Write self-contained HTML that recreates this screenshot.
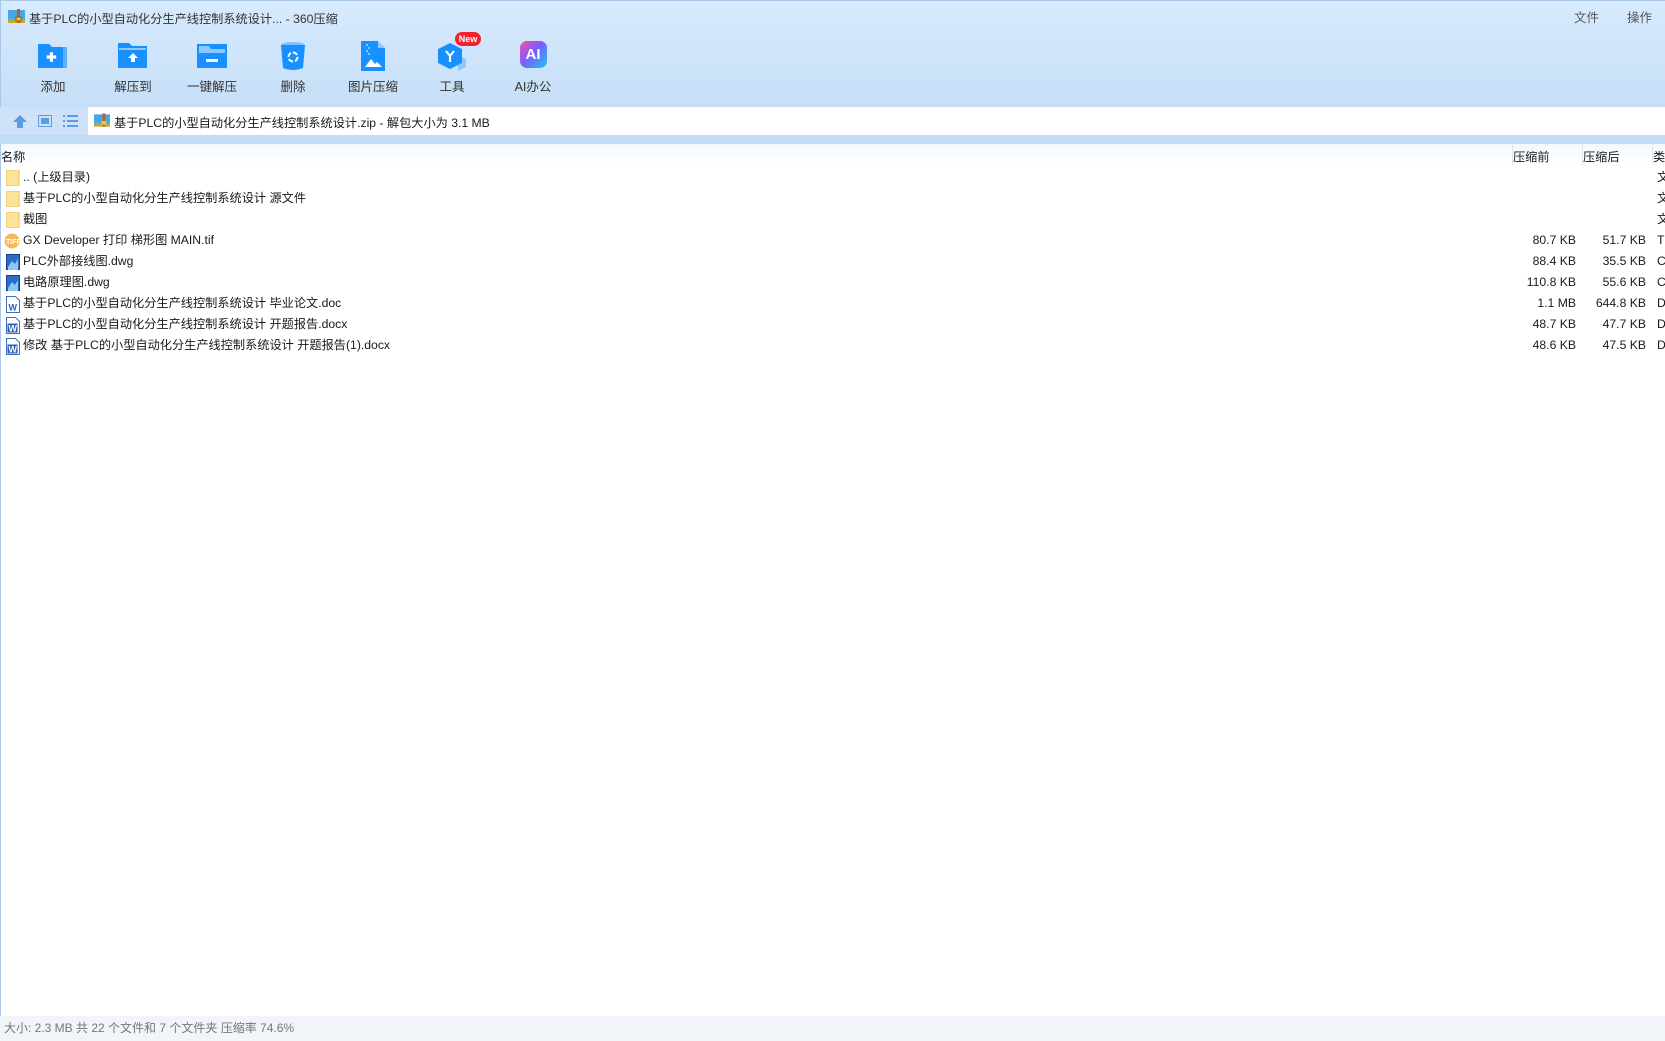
<!DOCTYPE html>
<html><head><meta charset="utf-8"><style>
*{margin:0;padding:0;box-sizing:border-box}
body{width:1665px;height:1041px;overflow:hidden;background:#fff;font-family:"Liberation Sans","Noto Sans CJK SC",sans-serif;font-size:12.2px;color:#1a1a1a;position:relative}
.top{position:absolute;left:0;top:0;width:1665px;height:107px;background:linear-gradient(#d7eafe,#c6dff7);border-top:1px solid #aac8ea;border-left:1px solid #aac8ea}
.title{position:absolute;left:28px;top:8px;font-size:12.2px;color:#333}
.menu{position:absolute;top:6px;font-size:12.5px;color:#555}
.tb{position:absolute;top:40px;width:80px;text-align:center}
.tb svg{display:block;margin:0 auto}
.tb span{display:block;margin-top:7px;font-size:12.5px;color:#333}
.addr{position:absolute;left:88px;top:107px;width:1577px;height:28px;background:#fff}
.nav{position:absolute;top:107px;height:28px;left:0;width:88px;background:#cde2f8}
.band{position:absolute;left:0;top:135px;width:1665px;height:9px;background:#c2dcf6}
.hdr{position:absolute;left:0;top:144px;width:1665px;height:21px;background:linear-gradient(#f3f8fe,#fff)}
.hdr div{position:absolute;top:3px}
.sep{position:absolute;top:0;height:21px;border-left:1px solid #dbe8f6}
.row{position:absolute;left:0;width:1665px;height:21px;line-height:21px}
.row .n{position:absolute;left:23px}
.row .ic{position:absolute;left:6px;top:3px}
.row .a{position:absolute;right:89px}
.row .b{position:absolute;right:19px}
.row .t{position:absolute;left:1657px}
.status{position:absolute;left:0;top:1016px;width:1665px;height:25px;background:#f1f4f9;color:#777;font-size:12px;line-height:24px;padding-left:4px}
.lb{position:absolute;left:0;top:144px;bottom:25px;border-left:1px solid #aac8ea}
</style></head><body>
<div class="top">
<svg style="position:absolute;left:7px;top:8px" width="17" height="15" viewBox="0 0 17 15"><rect x="0" y="1" width="17" height="13" fill="#4aa5ea"/><rect x="0" y="10" width="17" height="2" fill="#7cc242"/><rect x="0" y="12" width="17" height="2" fill="#f39a1e"/><rect x="9" y="0" width="3" height="14" fill="#b5651d"/><rect x="8" y="8" width="5" height="4" fill="#f6c342" stroke="#8a4a12" stroke-width=".8"/></svg>
<div class="title">基于PLC的小型自动化分生产线控制系统设计... - 360压缩</div>
<div class="menu" style="left:1573px">文件</div>
<div class="menu" style="left:1626px">操作</div>
<div class="tb" style="left:12px"><svg width="32" height="28" viewBox="0 0 32 28"><path d="M1 3h11l3 3h15v21H1z" fill="#1890ff"/><path d="M26 6h4v21h-4z" fill="#5db1ff"/><path d="M13 10h4v4h4v4h-4v4h-4v-4H9v-4h4z" fill="#fff" transform="scale(.8) translate(3,4)"/></svg><span>添加</span></div>
<div class="tb" style="left:92px"><svg width="32" height="28" viewBox="0 0 32 28"><path d="M1 2h11l3 3h15v22H1z" fill="#1890ff"/><rect x="2" y="7" width="27" height="2" fill="#8cc8ff"/><path d="M16 12l5 5h-3v4h-4v-4h-3z" fill="#fff"/></svg><span>解压到</span></div>
<div class="tb" style="left:171px"><svg width="32" height="28" viewBox="0 0 32 28"><path d="M1 3h30v24H1z" fill="#1890ff"/><path d="M3 5h10l2 3h14v4H3z" fill="#8cc8ff"/><rect x="10" y="18" width="12" height="3" fill="#fff"/></svg><span>一键解压</span></div>
<div class="tb" style="left:252px"><svg width="26" height="30" viewBox="0 0 26 30"><ellipse cx="13" cy="4" rx="12" ry="3" fill="#7cc0ff"/><path d="M1 4h24l-2 23q-10 4-20 0z" fill="#1890ff"/><circle cx="13" cy="16" r="4.5" fill="none" stroke="#fff" stroke-width="2" stroke-dasharray="5 2"/></svg><span style="margin-top:5px">删除</span></div>
<div class="tb" style="left:332px"><svg width="24" height="30" viewBox="0 0 24 30"><path d="M0 0h17l7 7v23H0z" fill="#1890ff"/><path d="M17 0v7h7z" fill="#8cc8ff"/><path d="M4 26l6-8 4 5 2-2 5 5z" fill="#fff"/><rect x="5" y="3" width="2" height="2" fill="#8cc8ff"/><rect x="7" y="6" width="2" height="2" fill="#8cc8ff"/><rect x="5" y="9" width="2" height="2" fill="#8cc8ff"/><rect x="7" y="12" width="2" height="2" fill="#8cc8ff"/></svg><span style="margin-top:5px">图片压缩</span></div>
<div class="tb" style="left:411px"><svg width="32" height="30" viewBox="0 0 32 30"><path d="M22 14l8 4v8l-8 4z" fill="#8cc8ff"/><path d="M14 2l12 6v14l-12 6-12-6V8z" fill="#1890ff"/><path d="M10 10l4 5 4-5M14 15v6" stroke="#fff" stroke-width="2.2" fill="none"/></svg><span style="margin-top:5px">工具</span></div>
<div style="position:absolute;left:454px;top:31px;width:26px;height:14px;border-radius:7px;background:#f5222d;color:#fff;font-size:9px;font-weight:bold;text-align:center;line-height:14px">New</div>
<div class="tb" style="left:492px"><div style="margin:0 auto;width:27px;height:27px;border-radius:7px;background:linear-gradient(135deg,#ff4fa8,#7b5cff 45%,#19c8f0);color:#fff;font-weight:bold;font-size:15px;line-height:27px">AI</div><span style="margin-top:8px">AI办公</span></div>
</div>
<div class="nav">
<svg style="position:absolute;left:13px;top:8px" width="14" height="13" viewBox="0 0 14 13"><path d="M7 0l7 7H10v6H4V7H0z" fill="#5b9ce6"/></svg>
<svg style="position:absolute;left:38px;top:8px" width="14" height="12" viewBox="0 0 14 12"><rect x=".5" y=".5" width="13" height="11" fill="none" stroke="#5b9ce6"/><rect x="3" y="3" width="8" height="6" fill="#5b9ce6"/></svg>
<svg style="position:absolute;left:63px;top:8px" width="15" height="12" viewBox="0 0 15 12"><g fill="#5b9ce6"><rect x="0" y="0" width="2" height="2"/><rect x="4" y="0" width="11" height="2"/><rect x="0" y="5" width="2" height="2"/><rect x="4" y="5" width="11" height="2"/><rect x="0" y="10" width="2" height="2"/><rect x="4" y="10" width="11" height="2"/></g></svg>
</div>
<div class="addr">
<svg style="position:absolute;left:6px;top:6px" width="16" height="15" viewBox="0 0 17 15"><rect x="0" y="1" width="17" height="13" fill="#4aa5ea"/><rect x="0" y="10" width="17" height="2" fill="#7cc242"/><rect x="0" y="12" width="17" height="2" fill="#f39a1e"/><rect x="9" y="0" width="3" height="14" fill="#b5651d"/><rect x="8" y="8" width="5" height="4" fill="#f6c342"/></svg>
<div style="position:absolute;left:26px;top:6px">基于PLC的小型自动化分生产线控制系统设计.zip - 解包大小为 3.1 MB</div>
</div>
<div class="band"></div>
<div class="hdr"><div style="left:1px">名称</div><span class="sep" style="left:1512px"></span><span class="sep" style="left:1582px"></span><span class="sep" style="left:1652px"></span><div style="left:1513px">压缩前</div><div style="left:1583px">压缩后</div><div style="left:1653px">类</div></div>
<div class="lb"></div>

<div class="row" style="top:167px"><svg class="ic" width="14" height="16"><rect x="0" y="0" width="13" height="16" fill="#fbe39a" stroke="#e6c25e"/></svg><span class="n">.. (上级目录)</span><span class="t">文</span></div>
<div class="row" style="top:188px"><svg class="ic" width="14" height="16"><rect x="0" y="0" width="13" height="16" fill="#fbe39a" stroke="#e6c25e"/></svg><span class="n">基于PLC的小型自动化分生产线控制系统设计 源文件</span><span class="t">文</span></div>
<div class="row" style="top:209px"><svg class="ic" width="14" height="16"><rect x="0" y="0" width="13" height="16" fill="#fbe39a" stroke="#e6c25e"/></svg><span class="n">截图</span><span class="t">文</span></div>
<div class="row" style="top:230px"><svg class="ic" style="left:4px" width="17" height="16"><circle cx="8" cy="8" r="7.5" fill="#f4b860"/><text x="2" y="11" font-size="7" fill="#fff" font-family="Liberation Sans" font-weight="bold">TIFF</text></svg><span class="n">GX Developer 打印 梯形图 MAIN.tif</span><span class="a">80.7 KB</span><span class="b">51.7 KB</span><span class="t">T</span></div>
<div class="row" style="top:251px"><svg class="ic" width="15" height="16"><rect x=".5" y=".5" width="13" height="15" fill="#2b6cc4" stroke="#123f87"/><path d="M2 13l4-6 3 3 3-5v11H2z" fill="#8ec5f3"/></svg><span class="n">PLC外部接线图.dwg</span><span class="a">88.4 KB</span><span class="b">35.5 KB</span><span class="t">C</span></div>
<div class="row" style="top:272px"><svg class="ic" width="15" height="16"><rect x=".5" y=".5" width="13" height="15" fill="#2b6cc4" stroke="#123f87"/><path d="M2 13l4-6 3 3 3-5v11H2z" fill="#8ec5f3"/></svg><span class="n">电路原理图.dwg</span><span class="a">110.8 KB</span><span class="b">55.6 KB</span><span class="t">C</span></div>
<div class="row" style="top:293px"><svg class="ic" width="15" height="17"><path d="M.5 .5h9l4 4v12H.5z" fill="#fff" stroke="#3d6fb6"/><rect x="2" y="7" width="9" height="8" fill="#fff"/><text x="2.5" y="14.5" font-size="9" font-weight="bold" fill="#2b5fb3" font-family="Liberation Sans">W</text></svg><span class="n">基于PLC的小型自动化分生产线控制系统设计 毕业论文.doc</span><span class="a">1.1 MB</span><span class="b">644.8 KB</span><span class="t">D</span></div>
<div class="row" style="top:314px"><svg class="ic" width="15" height="17"><path d="M.5 .5h9l4 4v12H.5z" fill="#fff" stroke="#3d6fb6"/><rect x="1.5" y="6.5" width="10" height="9" fill="#2b5fb3"/><text x="2.5" y="14.5" font-size="9" font-weight="bold" fill="#fff" font-family="Liberation Sans">W</text></svg><span class="n">基于PLC的小型自动化分生产线控制系统设计 开题报告.docx</span><span class="a">48.7 KB</span><span class="b">47.7 KB</span><span class="t">D</span></div>
<div class="row" style="top:335px"><svg class="ic" width="15" height="17"><path d="M.5 .5h9l4 4v12H.5z" fill="#fff" stroke="#3d6fb6"/><rect x="1.5" y="6.5" width="10" height="9" fill="#2b5fb3"/><text x="2.5" y="14.5" font-size="9" font-weight="bold" fill="#fff" font-family="Liberation Sans">W</text></svg><span class="n">修改 基于PLC的小型自动化分生产线控制系统设计 开题报告(1).docx</span><span class="a">48.6 KB</span><span class="b">47.5 KB</span><span class="t">D</span></div>

<div class="status">大小: 2.3 MB 共 22 个文件和 7 个文件夹 压缩率 74.6%</div>
</body></html>
